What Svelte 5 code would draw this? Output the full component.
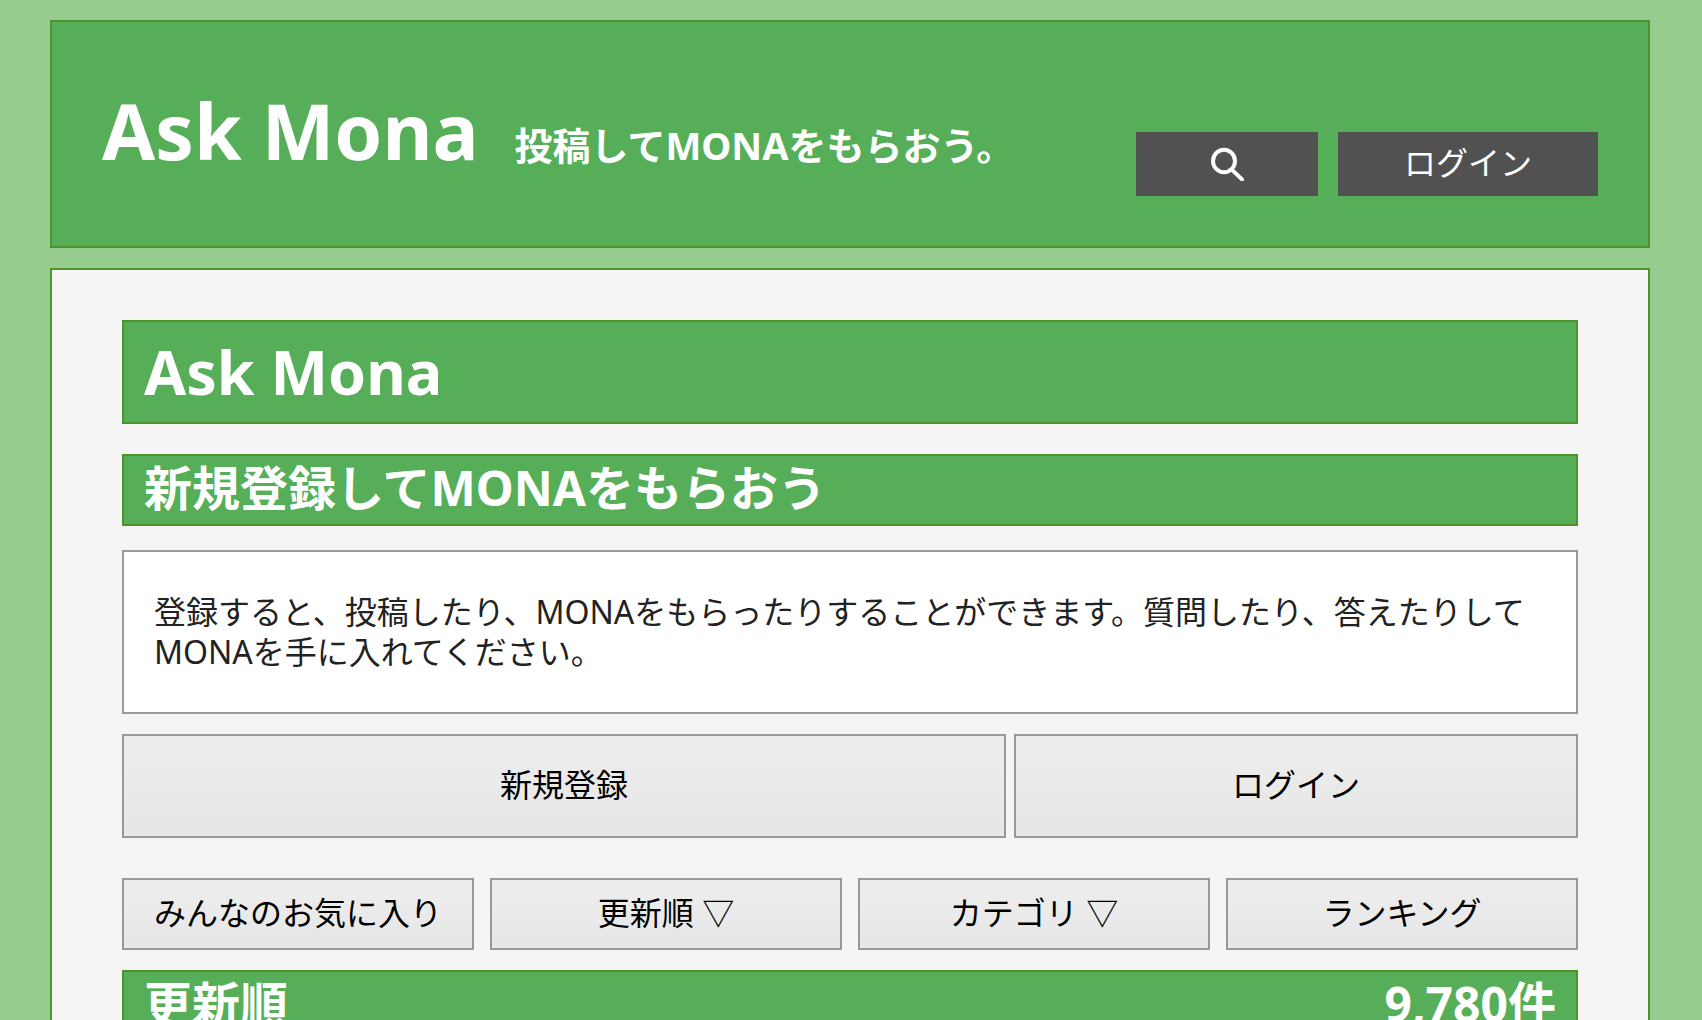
<script lang="ts">
    type Tab = { label: string; menu: boolean };

    const siteName = 'Ask Mona';
    const total = 9780;

    const tabs: Tab[] = [
        { label: 'みんなのお気に入り', menu: false },
        { label: '更新順', menu: true },
        { label: 'カテゴリ', menu: true },
        { label: 'ランキング', menu: false }
    ];
</script>

<div class="page">
    <header class="header">
        <div class="brand">
            <a class="logo" href="/">{siteName}</a>
            <p class="tagline">投稿してMONAをもらおう。</p>
        </div>
        <div class="actions">
            <button class="dark search" type="button" aria-label="検索">
                <svg width="34" height="34" viewBox="0 0 34 34" aria-hidden="true">
                    <ellipse cx="14" cy="14" rx="11" ry="11.2" />
                    <path d="M21.8 22.6 L32 32.4" />
                </svg>
            </button>
            <button class="dark login" type="button">ログイン</button>
        </div>
    </header>

    <main class="content">
        <h1>{siteName}</h1>

        <h2>新規登録してMONAをもらおう</h2>
        <p class="intro">登録すると、投稿したり、MONAをもらったりすることができます。質問したり、答えたりしてMONAを手に入れてください。</p>

        <div class="account">
            <button class="light" type="button">新規登録</button>
            <button class="light" type="button">ログイン</button>
        </div>

        <nav class="tabs">
            {#each tabs as tab}
                <button class="light" type="button">{tab.label}{tab.menu ? ' ▽' : ''}</button>
            {/each}
        </nav>

        <h2 class="list-title">
            <span>更新順</span>
            <span>{total.toLocaleString('en-US')}件</span>
        </h2>
    </main>
</div>

<style>
    :global(body) {
        background-color: #96cd8e;
        overflow-x: hidden;
    }

    .page {
        padding: 20px 52px 0 50px;
        font-family: "Noto Sans", "Noto Sans CJK JP", sans-serif;
        font-size: 32px;
        line-height: 40px;
        color: #222;
    }

    .header {
        display: flex;
        justify-content: space-between;
        align-items: flex-end;
        padding: 50px;
        margin-bottom: 20px;
        border: 2px solid #4f942b;
        background-color: #56ae59;
    }

    .brand {
        display: flex;
        align-items: baseline;
        gap: 36px;
        padding-bottom: 6px;
        color: #fff;
        font-weight: bold;
    }

    .logo {
        color: #fff;
        font-size: 77px;
        line-height: 118px;
        text-decoration: none;
    }

    .tagline {
        margin: 0;
        font-size: 38px;
    }

    .actions {
        display: flex;
        gap: 20px;
    }

    button {
        box-sizing: border-box;
        margin: 0;
        padding: 0 0 2px;
        font-family: inherit;
        font-size: 32px;
        line-height: 40px;
        cursor: pointer;
    }

    .dark {
        display: flex;
        justify-content: center;
        align-items: center;
        height: 64px;
        border: none;
        background-color: #515151;
        color: #fff;
    }

    .search {
        width: 182px;
        padding: 0;
    }

    .search svg {
        fill: none;
        stroke: #fff;
        stroke-width: 4;
        stroke-linecap: round;
    }

    .login {
        width: 260px;
    }

    .content {
        padding: 50px 70px;
        border: 2px solid #4f942b;
        background-color: #f5f5f5;
    }

    h1,
    h2 {
        margin: 0;
        padding: 0 20px;
        border: 2px solid #4f942b;
        background-color: #56ae59;
        color: #fff;
        font-weight: bold;
    }

    h1 {
        margin-bottom: 30px;
        font-size: 61px;
        line-height: 100px;
    }

    h2 {
        padding-bottom: 4px;
        font-size: 48px;
        line-height: 64px;
    }

    .intro {
        margin: 24px 0 20px;
        padding: 40px 30px;
        border: 2px solid #999;
        background-color: #fff;
    }

    .account {
        display: grid;
        grid-template-columns: 47fr 30fr;
        gap: 8px;
        margin-bottom: 40px;
    }

    .light {
        border: 2px solid #999;
        background: linear-gradient(#eee, #e6e6e6);
        color: #000;
    }

    .account .light {
        height: 104px;
    }

    .tabs {
        display: grid;
        grid-template-columns: repeat(4, 1fr);
        gap: 16px;
        margin-bottom: 20px;
    }

    .tabs .light {
        height: 72px;
    }

    .list-title {
        display: flex;
        justify-content: space-between;
    }
</style>
